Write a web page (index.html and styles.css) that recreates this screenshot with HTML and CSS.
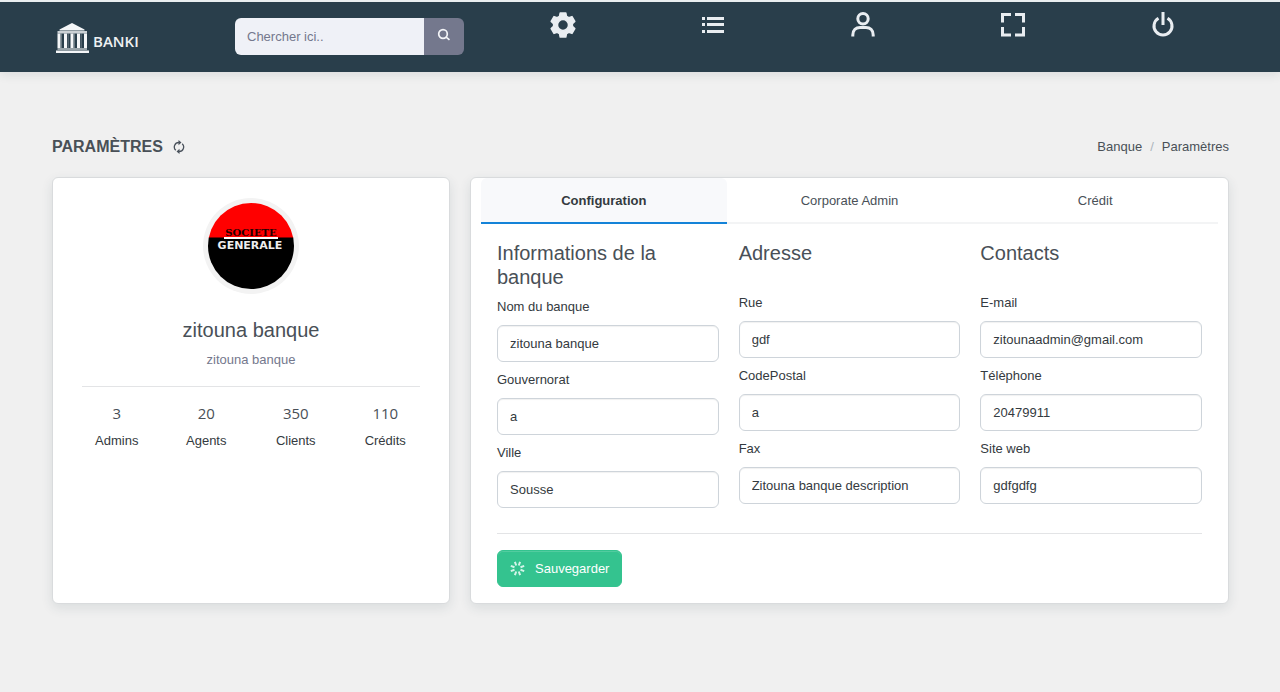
FILE: index.html
```html
<!DOCTYPE html>
<html lang="fr">
<head>
<meta charset="utf-8">
<title>Banki - Paramètres</title>
<link rel="stylesheet" href="styles.css">
</head>
<body>
<header class="topbar">
  <a class="brand" href="#">
    <svg width="34" height="30" viewBox="0 0 34 30" fill="#f4f6f8" aria-hidden="true">
      <path d="M16 0L3.500 6.500V7.500H28.500V6.500Z"/>
      <path d="M1.500 8H31V10.500H1.500Z" opacity=".8"/>
      <path d="M1.500 10.500H4.500V25H1.500ZM8 10.500H11V25H8ZM14.500 10.500H17.500V25H14.500ZM21 10.500H24V25H21ZM28 10.500H31V25H28Z"/>
      <path d="M5.200 10.500H6V25H5.200ZM11.700 10.500H12.500V25H11.700ZM18.200 10.500H19V25H18.200ZM24.700 10.500H25.500V25H24.700Z" opacity=".4"/>
      <path d="M1.500 25H31V27H1.500Z" opacity=".55"/>
      <path d="M0 27.500H33V30H0Z"/>
    </svg>
    <span>BANKI</span>
  </a>
  <form class="search">
    <input class="search-input" type="text" placeholder="Chercher ici.." aria-label="Chercher">
    <button class="search-button" type="button" aria-label="Lancer la recherche">
      <svg width="14" height="14" viewBox="0 0 14 14" fill="none" stroke="#f4f5f8" stroke-width="1.700"><circle cx="6" cy="6" r="4.300"/><path d="M8.800 8.800L12.500 11.800"/></svg>
    </button>
  </form>
  <nav class="tools">
    <a href="#" aria-label="Réglages"><svg width="30" height="30" viewBox="0 0 30 30" fill="#e9edf1" stroke="#e9edf1" stroke-width="1.500" stroke-linejoin="round"><path fill-rule="evenodd" d="M12.200 3H17.800L18.500 6.300L20.800 7.600L24 6.600L26.800 11.400L24.400 13.700V16.300L26.800 18.600L24 23.400L20.800 22.400L18.500 23.700L17.800 27H12.200L11.500 23.700L9.200 22.400L6 23.400L3.200 18.600L5.600 16.300V13.700L3.200 11.400L6 6.600L9.200 7.600L11.500 6.300ZM15 9.500A5.500 5.500 0 1 0 15 20.500A5.500 5.500 0 1 0 15 9.500Z"/></svg></a>
    <a href="#" aria-label="Liste"><svg width="30" height="30" viewBox="0 0 30 30" fill="#e9edf1"><path d="M4 7h3v3H4zM4 13h3v3H4zM4 20h3v3H4zM9 7h17v3H9zM9 13h17v3H9zM9 20h17v3H9z"/></svg></a>
    <a href="#" aria-label="Profil"><svg width="30" height="30" viewBox="0 0 30 30" fill="none" stroke="#e9edf1" stroke-width="3"><circle cx="15" cy="8.800" r="5.200"/><path d="M4.800 26.500V25C4.800 20 8 17.500 12 17.500H18C22 17.500 25.200 20 25.200 25V26.500"/></svg></a>
    <a href="#" aria-label="Plein écran"><svg width="30" height="30" viewBox="0 0 30 30" fill="none" stroke="#e9edf1" stroke-width="3"><path d="M4.500 12.500V4.500H13M17 4.500H25.500V12.500M25.500 17V25H17M13 25H4.500V17"/></svg></a>
    <a href="#" aria-label="Déconnexion"><svg width="30" height="30" viewBox="0 0 30 30" fill="none" stroke="#e9edf1" stroke-width="3"><path d="M15 2V15M10.500 8.200A9 9 0 1 0 19.500 8.200"/></svg></a>
  </nav>
</header>

<main class="page">
  <div class="page-head">
    <h1 class="page-title">PARAMÈTRES
      <svg width="12" height="14" viewBox="0 0 12 14" aria-hidden="true"><path d="M6 2.500A4.500 4.500 0 0 0 2.800 10.300M6 11.500A4.500 4.500 0 0 0 9.200 3.700" fill="none" stroke="#4a525c" stroke-width="1.300"/><path d="M5.500 0L8.500 2.600L5.500 5.200ZM6.500 14L3.500 11.400L6.500 8.800Z" fill="#4a525c"/></svg>
    </h1>
    <nav class="crumbs"><a href="#">Banque</a><span class="slash">/</span><a href="#">Paramètres</a></nav>
  </div>

  <div class="cards">
    <section class="card profile">
      <svg class="avatar" width="96" height="96" viewBox="0 0 96 96" role="img" aria-label="Société Générale">
        <defs><clipPath id="disc"><circle cx="48" cy="48" r="43"/></clipPath></defs>
        <circle cx="48" cy="48" r="48" fill="#f3f3f3"/>
        <g clip-path="url(#disc)">
          <path fill="#f00" d="M0 0H96V40H0Z"/>
          <path fill="#000" d="M0 39.500H96V96H0Z"/>
          <path fill="#fff" d="M21 39H75V41H21Z"/>
        </g>
        <text class="logo-top" x="48" y="38" text-anchor="middle">SOCIETE</text>
        <text class="logo-bottom" x="47" y="51" text-anchor="middle">GENERALE</text>
      </svg>
      <h2 class="profile-name">zitouna banque</h2>
      <p class="profile-sub">zitouna banque</p>
      <hr class="rule">
      <dl class="stats">
        <div><dd>3</dd><dt>Admins</dt></div>
        <div><dd>20</dd><dt>Agents</dt></div>
        <div><dd>350</dd><dt>Clients</dt></div>
        <div><dd>110</dd><dt>Crédits</dt></div>
      </dl>
    </section>

    <section class="card settings">
      <div class="tabs" role="tablist">
        <button class="tab active" type="button" role="tab" aria-selected="true">Configuration</button>
        <button class="tab" type="button" role="tab" aria-selected="false">Corporate Admin</button>
        <button class="tab" type="button" role="tab" aria-selected="false">Crédit</button>
      </div>
      <form class="config">
        <div class="columns">
          <div class="column">
            <h3>Informations de la banque</h3>
            <label for="nom">Nom du banque</label><input id="nom" type="text" value="zitouna banque">
            <label for="gouv">Gouvernorat</label><input id="gouv" type="text" value="a">
            <label for="ville">Ville</label><input id="ville" type="text" value="Sousse">
          </div>
          <div class="column spaced">
            <h3>Adresse</h3>
            <label for="rue">Rue</label><input id="rue" type="text" value="gdf">
            <label for="cp">CodePostal</label><input id="cp" type="text" value="a">
            <label for="fax">Fax</label><input id="fax" type="text" value="Zitouna banque description">
          </div>
          <div class="column spaced">
            <h3>Contacts</h3>
            <label for="mail">E-mail</label><input id="mail" type="email" value="zitounaadmin@gmail.com">
            <label for="tel">Télèphone</label><input id="tel" type="text" value="20479911">
            <label for="web">Site web</label><input id="web" type="text" value="gdfgdfg">
          </div>
        </div>
        <hr class="rule">
        <button class="save" type="button">
          <svg width="15" height="15" viewBox="-7.500 -7.500 15 15" fill="none" stroke="#d3f4e8" stroke-width="2" aria-hidden="true"><path d="M1.300 -3L2.600 -6.700M3 -1.300L6.700 -2.600M3 1.300L6.700 2.600M1.300 3L2.600 6.700M-1.300 3L-2.600 6.700M-3 1.300L-6.700 2.600M-3 -1.300L-6.700 -2.600M-1.300 -3L-2.600 -6.700"/></svg>
          Sauvegarder
        </button>
      </form>
    </section>
  </div>
</main>
</body>
</html>
```
FILE: styles.css
```css
* { box-sizing: border-box; }

body {
  margin: 0;
  background: #f0f0f0;
  color: #343a40;
  font: 13px/20px "Liberation Sans", Arial, sans-serif;
}

a { color: inherit; text-decoration: none; }
input, button { font: inherit; }
h1, h2, h3, p, dl, dd { margin: 0; font-weight: 400; }

.topbar {
  display: grid;
  grid-template-columns: 179px 229px 1fr;
  align-items: start;
  height: 72px;
  padding: 0 42px 0 56px;
  border-top: 2px solid #e9eef0;
  background: #293e4b;
  box-shadow: 0 2px 10px rgba(40, 62, 75, .12);
}

.brand {
  display: flex;
  align-items: center;
  gap: 3px;
  padding-top: 21px;
  color: #eef1f3;
  font: 600 15px/24px "Open Sans", sans-serif;
}
.brand span { padding-top: 5px; }

.search {
  display: flex;
  height: 37px;
  margin-top: 16px;
  overflow: hidden;
  border-radius: 6px;
}
.search-input {
  flex: 1;
  min-width: 0;
  padding: 0 12px;
  border: 0;
  background: #eff1f7;
}
.search-input::placeholder { color: #74788d; opacity: 1; }
.search-button {
  width: 40px;
  padding: 0 0 4px;
  border: 0;
  background: #74788d;
}
.search-button svg { vertical-align: middle; }

.tools {
  display: grid;
  grid-template-columns: repeat(5, 1fr);
  justify-items: center;
  padding: 8px 0 0 24px;
}
.tools svg { display: block; }

.page { padding: 65px 51px 88px 52px; }

.page-head {
  display: flex;
  justify-content: space-between;
  align-items: center;
  margin-bottom: 20px;
}
.page-title {
  display: flex;
  align-items: center;
  gap: 10px;
  color: #495057;
  font-size: 16px;
  font-weight: 700;
}
.crumbs { display: flex; gap: 8px; color: #495057; }
.slash { color: #adb5bd; }

.cards {
  display: grid;
  grid-template-columns: 398fr 759fr;
  gap: 20px;
}
.card {
  border: 1px solid #d9dbdd;
  border-radius: 6px;
  background: #fff;
  box-shadow: 0 4px 12px rgba(40, 62, 75, .11);
}

.profile {
  padding: 20px 29px;
  text-align: center;
}
.avatar { display: block; margin: 0 auto 24px; }
.logo-top { font: 900 10px "DejaVu Serif", serif; fill: #200; }
.logo-bottom { font: 700 11px "DejaVu Sans", sans-serif; fill: #eee; }
.profile-name { color: #495057; font-size: 20px; line-height: 24px; }
.profile-sub { padding-top: 8px; color: #74788d; }

.rule {
  height: 1px;
  margin: 16px 0;
  border: 0;
  background: #e3e4e6;
}
.stats {
  display: grid;
  grid-template-columns: repeat(4, 1fr);
  margin: 0 -10px;
}
.stats div { display: flex; flex-direction: column; gap: 8px; }
.stats dd { color: #495057; font: 15px/20px "Open Sans", sans-serif; }

.settings { padding: 0 10px 16px; }
.tabs { display: grid; grid-template-columns: repeat(3, 1fr); }
.tab {
  height: 46px;
  padding: 2px 0 0;
  border: 0;
  border-bottom: 2px solid #f3f4f5;
  background: none;
  color: #495057;
}
.tab.active {
  border-bottom-color: #1483d8;
  border-radius: 6px 6px 0 0;
  background: #f8f9fb;
  color: #343a40;
  font-weight: 700;
}

.config { padding: 17px 16px 0; }
.columns {
  display: grid;
  grid-template-columns: repeat(3, 1fr);
  gap: 20px;
}
.column { display: flex; flex-direction: column; }
.column h3 { color: #495057; font-size: 20px; line-height: 24px; }
.spaced h3 { margin-bottom: 20px; }
.column label { padding: 8px 0; }
.column input {
  width: 100%;
  height: 37px;
  padding: 0 12px;
  border: 1px solid #ced4da;
  border-radius: 6px;
  background: #fff;
  color: #343a40;
  box-shadow: inset 0 1px 1px rgba(0, 0, 0, .06);
}
.config .rule { margin-top: 25px; }
.save {
  display: flex;
  align-items: center;
  gap: 10px;
  height: 37px;
  padding: 0 12px;
  border: 1px solid #34c38f;
  border-radius: 6px;
  background: #34c38f;
  color: #fff;
  box-shadow: inset 0 1px 0 rgba(255, 255, 255, .15);
}
```
